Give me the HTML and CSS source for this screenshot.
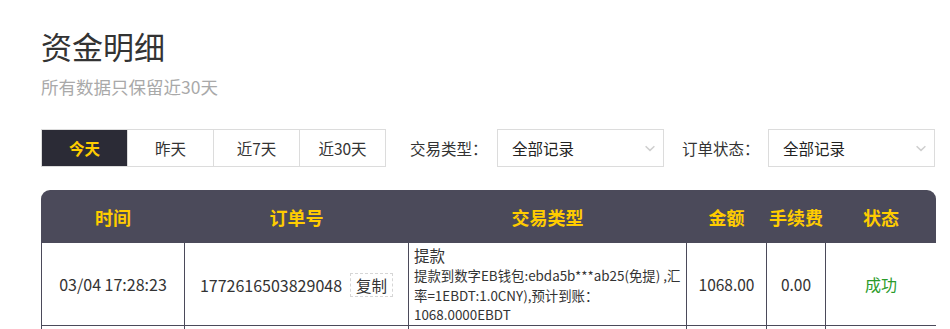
FILE: index.html
```html
<!DOCTYPE html>
<html lang="zh-CN">
<head>
<meta charset="utf-8">
<title>资金明细</title>
<link rel="stylesheet" href="styles.css">
</head>
<body>
<div class="page">
  <h1 class="title">资金明细</h1>
  <p class="subtitle">所有数据只保留近30天</p>

  <div class="filters">
    <div class="tabs">
      <div class="tab active">今天</div>
      <div class="tab">昨天</div>
      <div class="tab">近7天</div>
      <div class="tab">近30天</div>
    </div>
    <div class="filter first">
      <span class="label">交易类型：</span>
      <div class="select">
        <span>全部记录</span>
        <svg class="arrow" width="10" height="7" viewBox="0 0 10 7"><path d="M0.6 1.2 L5 5.4 L9.4 1.2" fill="none" stroke="#cfcfcf" stroke-width="1.5"/></svg>
      </div>
    </div>
    <div class="filter second">
      <span class="label">订单状态：</span>
      <div class="select">
        <span>全部记录</span>
        <svg class="arrow" width="10" height="7" viewBox="0 0 10 7"><path d="M0.6 1.2 L5 5.4 L9.4 1.2" fill="none" stroke="#cfcfcf" stroke-width="1.5"/></svg>
      </div>
    </div>
  </div>

  <div class="table-wrap">
    <table class="records">
      <colgroup>
        <col class="c-time"><col class="c-order"><col class="c-type"><col class="c-amount"><col class="c-fee"><col class="c-status">
      </colgroup>
      <thead>
        <tr>
          <th>时间</th>
          <th>订单号</th>
          <th>交易类型</th>
          <th>金额</th>
          <th>手续费</th>
          <th>状态</th>
        </tr>
      </thead>
      <tbody>
        <tr>
          <td>03/04 17:28:23</td>
          <td><span class="order-no">1772616503829048</span><span class="copy">复制</span></td>
          <td class="type-cell">
            <div class="type-name">提款</div>
            <div class="type-desc">提款到数字EB钱包:ebda5b***ab25(免提) ,汇率=1EBDT:1.0CNY),预计到账：1068.0000EBDT</div>
          </td>
          <td class="num">1068.00</td>
          <td class="num">0.00</td>
          <td class="ok">成功</td>
        </tr>
        <tr class="next">
          <td></td><td></td><td></td><td></td><td></td><td></td>
        </tr>
      </tbody>
    </table>
  </div>
</div>
</body>
</html>
```

FILE: styles.css
```css
* { box-sizing: border-box; }

html, body {
  margin: 0;
  padding: 0;
  background: #fff;
}

body {
  font-family: "Noto Sans CJK SC", "Noto Sans", sans-serif;
  color: #333;
  overflow: hidden;
}

.page {
  padding: 26px 0 0 41px;
  width: 950px;
}

.title {
  margin: 0;
  font-size: 31px;
  font-weight: 400;
  line-height: 40px;
  color: #333;
}

.subtitle {
  margin: 9px 0 0;
  font-size: 17.5px;
  line-height: 24px;
  color: #a9a9a9;
}

.filters {
  display: flex;
  align-items: center;
  margin-top: 30px;
  height: 38px;
}

.tabs {
  display: flex;
  border: 1px solid #dcdcdc;
  height: 38px;
}

.tab {
  width: 86px;
  height: 36px;
  display: flex;
  align-items: center;
  justify-content: center;
  font-size: 15.5px;
  color: #333;
  border-left: 1px solid #dcdcdc;
}

.tab:first-child {
  border-left: none;
  width: 85px;
}

.tab.active {
  background: #2b2b36;
  color: #ffcc00;
  font-weight: 700;
}

.filter {
  display: flex;
  align-items: center;
}

.filter.first { margin-left: 24px; }
.filter.second { margin-left: 18px; }

.label {
  font-size: 15.5px;
  color: #333;
}

.filter.first .label { width: 87px; }
.filter.second .label { width: 86px; }

.select {
  width: 167px;
  height: 38px;
  border: 1px solid #dcdcdc;
  display: flex;
  align-items: center;
  justify-content: space-between;
  padding: 0 8px 0 14px;
  font-size: 15.5px;
  color: #222;
}

.table-wrap {
  margin-top: 23px;
  width: 895px;
  border-radius: 9px 9px 0 0;
  overflow: hidden;
}

.records {
  width: 895px;
  border-collapse: collapse;
  table-layout: fixed;
}

.c-time { width: 143px; }
.c-order { width: 224px; }
.c-type { width: 278px; }
.c-amount { width: 80px; }
.c-fee { width: 59px; }
.c-status { width: 111px; }

.records th {
  background: #4b4a5a;
  color: #ffcc00;
  font-size: 18px;
  font-weight: 700;
  height: 52px;
  padding: 0;
  text-align: center;
  border: 1px solid #4b4a5a;
}

.records td {
  border: 1px solid #4b4a5a;
  text-align: center;
  font-size: 16px;
  color: #333;
  padding: 0;
  height: 82px;
}

.records td.num { font-size: 15.5px; }

.order-no { vertical-align: middle; }

.copy {
  display: inline-block;
  vertical-align: middle;
  margin-left: 8px;
  height: 24px;
  line-height: 22px;
  padding: 0 5px;
  border: 1px dashed #d6d6d6;
  font-size: 15.5px;
  color: #333;
}

.records td.type-cell {
  text-align: left;
  padding: 0 2px 0 5px;
  vertical-align: top;
}

.type-name {
  font-size: 15.5px;
  line-height: 22px;
  margin-top: 1px;
}

.type-desc {
  font-size: 13.4px;
  line-height: 19.5px;
}

.records td.ok { color: #2a9b2a; }

.records tr.next td { height: 5px; }
```
